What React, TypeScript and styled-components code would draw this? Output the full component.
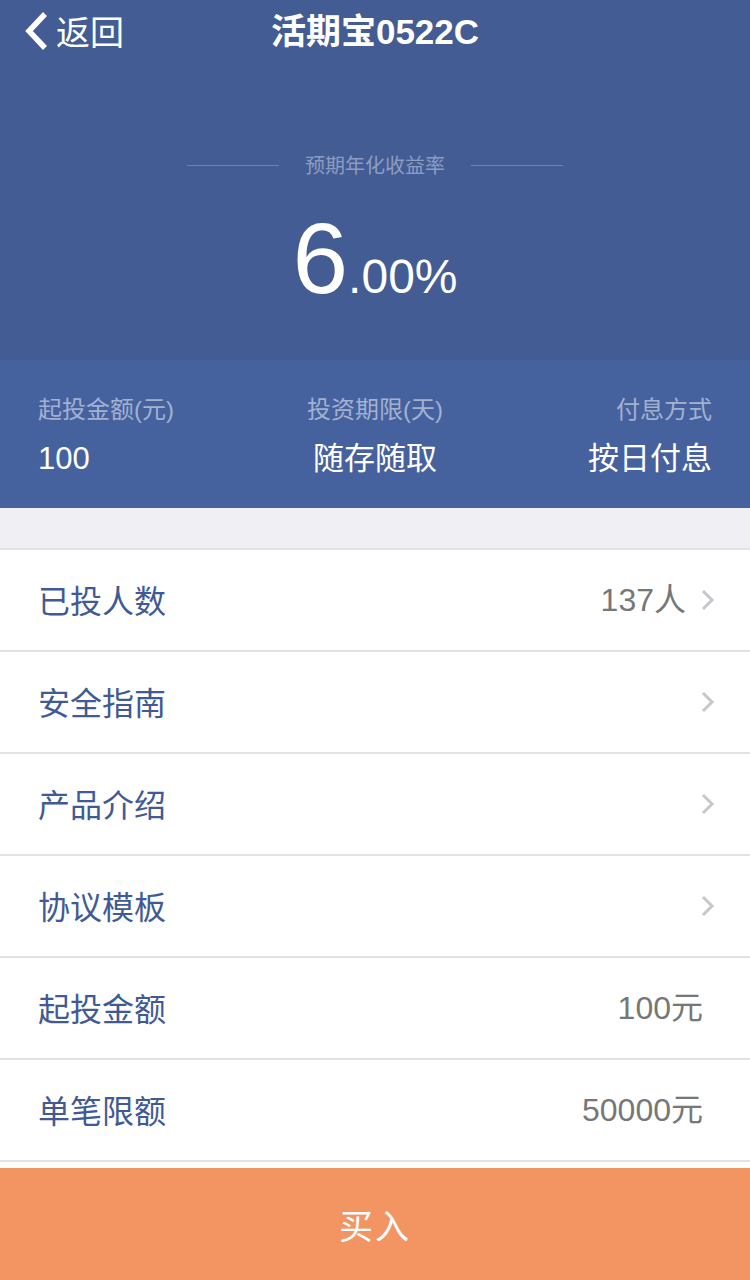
import React from "react";
import styled, { createGlobalStyle } from "styled-components";

const Global = createGlobalStyle`
  html, body { margin: 0; padding: 0; background: #ffffff; }
  body { font-family: "Liberation Sans", "Noto Sans CJK SC", sans-serif; }
  * { box-sizing: border-box; }
`;

const Page = styled.div`
  width: 750px;
  min-height: 1280px;
  background: #ffffff;
  padding-bottom: 118px;
`;

const Header = styled.header`
  background: #435c94;
  height: 360px;
  display: flex;
  flex-direction: column;
`;

const NavBar = styled.div`
  height: 62px;
  display: grid;
  grid-template-columns: 180px 1fr 180px;
  align-items: center;
`;

const BackButton = styled.div`
  display: flex;
  align-items: center;
  gap: 6px;
  padding-left: 23px;
  color: #ffffff;
  font-size: 34px;
  font-family: "Noto Sans CJK SC", sans-serif;
  line-height: 1;
`;

const Title = styled.h1`
  margin: 0;
  text-align: center;
  color: #ffffff;
  font-size: 35px;
  font-weight: 700;
  font-family: "Liberation Sans", "Noto Sans CJK SC", sans-serif;
  line-height: 1;
`;

const RateBlock = styled.div`
  display: flex;
  flex-direction: column;
  align-items: center;
  padding-top: 90px;
`;

const RateLabelRow = styled.div`
  display: flex;
  align-items: center;
  gap: 26px;
  color: #8d9dc2;
  font-size: 20px;
  font-family: "Noto Sans CJK SC", sans-serif;
  line-height: 26px;
`;

const Rule = styled.span`
  width: 92px;
  height: 1px;
  background: #6f83b0;
`;

const RateValue = styled.div`
  margin-top: 30px;
  color: #ffffff;
  font-family: "Liberation Sans", sans-serif;
  font-weight: 400;
  line-height: 1;
  display: flex;
  align-items: baseline;
`;

const RateBig = styled.span`
  font-size: 100px;
`;

const RateSmall = styled.span`
  font-size: 48px;
`;

const StatsBand = styled.section`
  background: #46629e;
  height: 148px;
  padding: 0 38px;
  display: grid;
  grid-template-columns: 1fr 1fr 1fr;
  align-content: center;
`;

const Stat = styled.div<{ $align: "left" | "center" | "right" }>`
  display: flex;
  flex-direction: column;
  align-items: ${(p) =>
    p.$align === "left" ? "flex-start" : p.$align === "right" ? "flex-end" : "center"};
  gap: 16px;
  padding-top: 4px;
`;

const StatLabel = styled.span`
  color: #a2b1d1;
  font-size: 24px;
  font-family: "Liberation Sans", "Noto Sans CJK SC", sans-serif;
  line-height: 30px;
`;

const StatValue = styled.span`
  color: #ffffff;
  font-size: 31px;
  font-family: "Liberation Sans", "Noto Sans CJK SC", sans-serif;
  line-height: 36px;
`;

const Spacer = styled.div`
  height: 40px;
  background: #efeff4;
`;

const List = styled.ul`
  list-style: none;
  margin: 0;
  padding: 0;
  border-bottom: 2px solid #e2e2e2;
`;

const Row = styled.li`
  height: 102px;
  border-top: 2px solid #e2e2e2;
  display: flex;
  align-items: center;
  justify-content: space-between;
  padding: 0 34px 0 38px;
`;

const RowLabel = styled.span`
  color: #3f5a95;
  font-size: 32px;
  font-family: "Noto Sans CJK SC", sans-serif;
  line-height: 1;
  margin-top: -3px;
`;

const RowRight = styled.span`
  display: flex;
  align-items: center;
  gap: 14px;
`;

const RowValue = styled.span<{ $pad?: boolean }>`
  color: #777777;
  font-size: 32px;
  font-family: "Liberation Sans", "Noto Sans CJK SC", sans-serif;
  line-height: 1;
  padding-right: ${(p) => (p.$pad ? "13px" : "0")};
`;

const BuyButton = styled.button`
  position: fixed;
  left: 0;
  bottom: 0;
  width: 750px;
  height: 112px;
  border: none;
  background: #f29562;
  color: #ffffff;
  font-size: 34px;
  font-family: "Noto Sans CJK SC", sans-serif;
  letter-spacing: 2px;
  padding: 0;
`;

const Chevron = () => (
  <svg width="16" height="24" viewBox="0 0 16 24">
    <path d="M3 3 L12 12 L3 21" fill="none" stroke="#c7c7cc" strokeWidth="3" />
  </svg>
);

const BackChevron = () => (
  <svg width="27" height="40" viewBox="0 0 27 40">
    <path d="M22 3 L6 20 L22 37" fill="none" stroke="#ffffff" strokeWidth="5.5" />
  </svg>
);

type Item = { label: string; value?: string; link?: boolean };

const items: Item[] = [
  { label: "已投人数", value: "137人", link: true },
  { label: "安全指南", link: true },
  { label: "产品介绍", link: true },
  { label: "协议模板", link: true },
  { label: "起投金额", value: "100元" },
  { label: "单笔限额", value: "50000元" },
];

export default function App() {
  return (
    <Page>
      <Global />
      <Header>
        <NavBar>
          <BackButton>
            <BackChevron />
            返回
          </BackButton>
          <Title>活期宝0522C</Title>
          <div />
        </NavBar>
        <RateBlock>
          <RateLabelRow>
            <Rule />
            预期年化收益率
            <Rule />
          </RateLabelRow>
          <RateValue>
            <RateBig>6</RateBig>
            <RateSmall>.00%</RateSmall>
          </RateValue>
        </RateBlock>
      </Header>
      <StatsBand>
        <Stat $align="left">
          <StatLabel>起投金额(元)</StatLabel>
          <StatValue>100</StatValue>
        </Stat>
        <Stat $align="center">
          <StatLabel>投资期限(天)</StatLabel>
          <StatValue>随存随取</StatValue>
        </Stat>
        <Stat $align="right">
          <StatLabel>付息方式</StatLabel>
          <StatValue>按日付息</StatValue>
        </Stat>
      </StatsBand>
      <Spacer />
      <List>
        {items.map((it) => (
          <Row key={it.label}>
            <RowLabel>{it.label}</RowLabel>
            <RowRight>
              {it.value && <RowValue $pad={!it.link}>{it.value}</RowValue>}
              {it.link && <Chevron />}
            </RowRight>
          </Row>
        ))}
      </List>
      <BuyButton>买入</BuyButton>
    </Page>
  );
}
